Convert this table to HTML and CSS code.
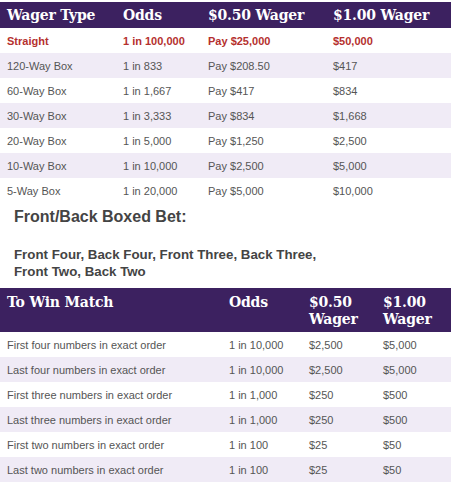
FILE: index.html
```html
<!DOCTYPE html>
<html>
<head>
<meta charset="utf-8">
<link rel="stylesheet" href="styles.css">
</head>
<body>
<table class="grid top">
  <colgroup><col class="c1"><col class="c2"><col class="c3"><col class="c4"></colgroup>
  <thead>
    <tr><th>Wager Type</th><th>Odds</th><th>$0.50 Wager</th><th>$1.00 Wager</th></tr>
  </thead>
  <tbody>
    <tr class="hl"><td>Straight</td><td>1 in 100,000</td><td>Pay $25,000</td><td>$50,000</td></tr>
    <tr><td>120-Way Box</td><td>1 in 833</td><td>Pay $208.50</td><td>$417</td></tr>
    <tr><td>60-Way Box</td><td>1 in 1,667</td><td>Pay $417</td><td>$834</td></tr>
    <tr><td>30-Way Box</td><td>1 in 3,333</td><td>Pay $834</td><td>$1,668</td></tr>
    <tr><td>20-Way Box</td><td>1 in 5,000</td><td>Pay $1,250</td><td>$2,500</td></tr>
    <tr><td>10-Way Box</td><td>1 in 10,000</td><td>Pay $2,500</td><td>$5,000</td></tr>
    <tr><td>5-Way Box</td><td>1 in 20,000</td><td>Pay $5,000</td><td>$10,000</td></tr>
  </tbody>
</table>
<div class="section">
  <h3 class="section-title">Front/Back Boxed Bet:</h3>
  <p class="section-text">Front Four, Back Four, Front Three, Back Three,<br>Front Two, Back Two</p>
</div>
<table class="grid bottom">
  <colgroup><col class="d1"><col class="d2"><col class="d3"><col class="d4"></colgroup>
  <thead>
    <tr><th>To Win Match</th><th>Odds</th><th>$0.50 Wager</th><th>$1.00 Wager</th></tr>
  </thead>
  <tbody>
    <tr><td>First four numbers in exact order</td><td>1 in 10,000</td><td>$2,500</td><td>$5,000</td></tr>
    <tr><td>Last four numbers in exact order</td><td>1 in 10,000</td><td>$2,500</td><td>$5,000</td></tr>
    <tr><td>First three numbers in exact order</td><td>1 in 1,000</td><td>$250</td><td>$500</td></tr>
    <tr><td>Last three numbers in exact order</td><td>1 in 1,000</td><td>$250</td><td>$500</td></tr>
    <tr><td>First two numbers in exact order</td><td>1 in 100</td><td>$25</td><td>$50</td></tr>
    <tr><td>Last two numbers in exact order</td><td>1 in 100</td><td>$25</td><td>$50</td></tr>
  </tbody>
</table>
</body>
</html>
```
FILE: styles.css
```css
html, body {
  margin: 0;
  padding: 0;
  background: #fff;
}
body {
  font-family: "Liberation Sans", Arial, sans-serif;
  color: #555;
}
.grid {
  width: 451px;
  border-collapse: collapse;
  table-layout: fixed;
}
.top { margin-top: 2px; }
.c1 { width: 116px; }
.c2 { width: 85px; }
.c3 { width: 125px; }
.c4 { width: 125px; }
.d1 { width: 222px; }
.d2 { width: 80px; }
.d3 { width: 74px; }
.d4 { width: 75px; }
.grid th {
  background: #3c2160;
  color: #fff;
  font-family: "DejaVu Serif", Georgia, serif;
  font-weight: bold;
  font-size: 14px;
  letter-spacing: -0.2px;
  text-align: left;
  vertical-align: top;
  padding: 5px 0 4px 7px;
  line-height: 17px;
}
.top th { height: 17px; white-space: nowrap; }
.bottom th { height: 35px; padding-top: 6px; padding-bottom: 3px; }
.grid td {
  font-size: 11px;
  height: 25px;
  padding: 0 0 0 7px;
  vertical-align: middle;
  white-space: nowrap;
}
.grid tbody tr:nth-child(even) td { background: #f0ebf6; }
.top .hl td {
  color: #b5302e;
  font-weight: bold;
}
.section {
  padding: 0 0 0 14px;
  color: #444;
}
.section-title {
  margin: 0;
  font-size: 16px;
  font-weight: bold;
  padding-top: 4px;
  line-height: 20px;
}
.section-text {
  margin: 0;
  padding: 19px 0 8px;
  font-size: 13.3px;
  font-weight: bold;
  line-height: 17px;
}
```
